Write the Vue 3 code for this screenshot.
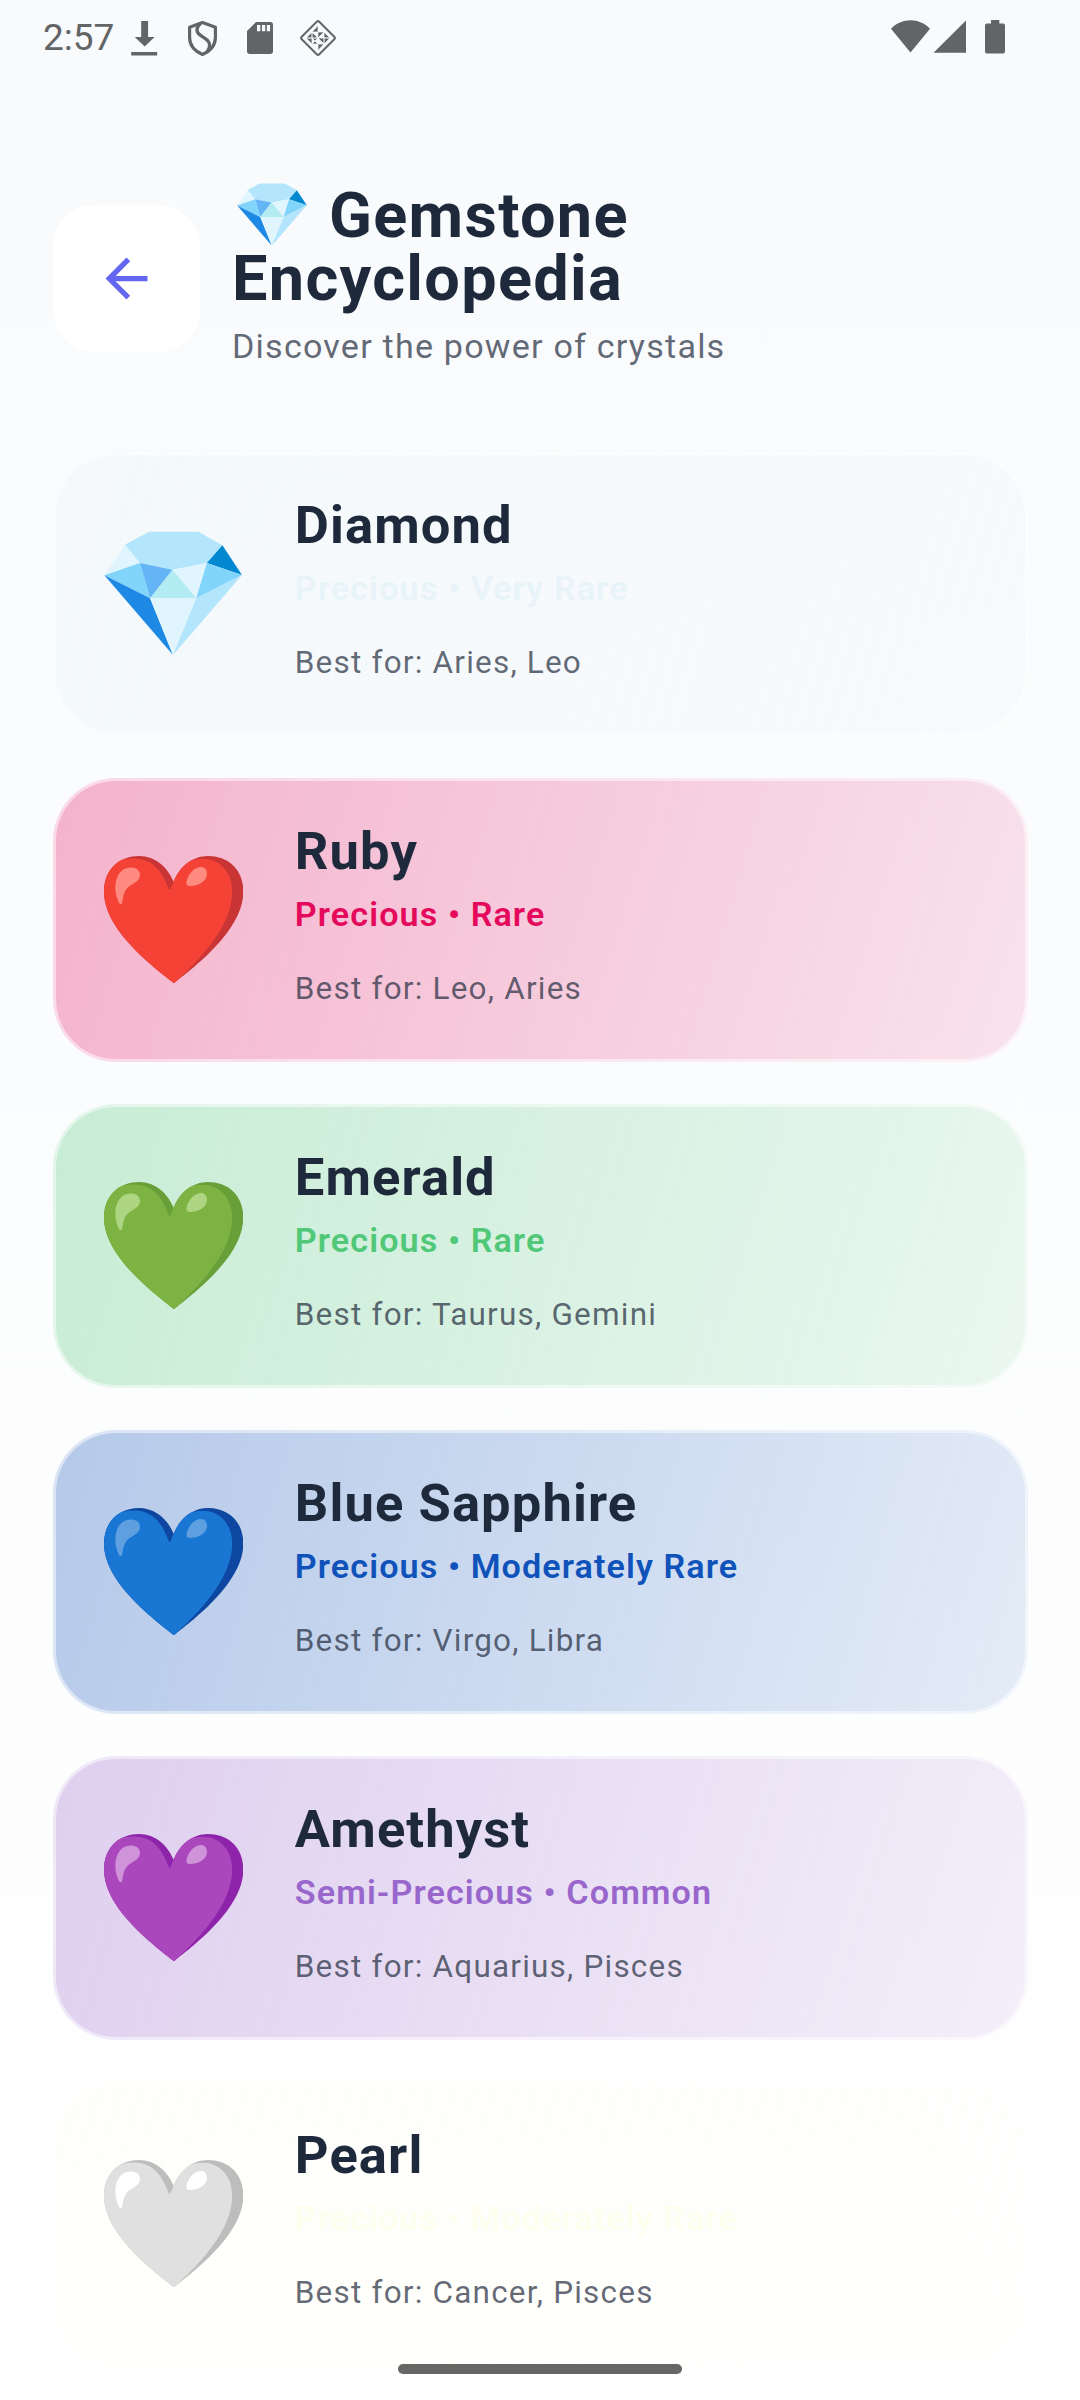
<script setup>
const facets = [
  ['20.8,13.7 45,.7 94.3,.7 118.4,14.3 102.9,32 68.6,38.7 36,32', '#b3e5fc'],
  ['.4,44.3 20.8,13.7 36,32', '#e1f5fe'],
  ['118.4,14.3 138,44 102.9,32', '#0288d1'],
  ['.4,44.3 36,32 46.1,67.3', '#81d4fa'],
  ['36,32 68.6,38.7 46.1,67.3', '#64b5f6'],
  ['68.6,38.7 102.9,32 92.2,67.3', '#e1f5fe'],
  ['68.6,38.7 92.2,67.3 46.1,67.3', '#b2ebf2'],
  ['102.9,32 138,44 92.2,67.3', '#81d4fa'],
  ['.4,44.3 46.1,67.3 69,124', '#1e88e5'],
  ['46.1,67.3 92.2,67.3 69,124', '#e1f5fe'],
  ['92.2,67.3 138,44 69,124', '#b3e5fc'],
]

const gems = [
  { name: 'Diamond', type: 'Precious', rarity: 'Very Rare', signs: 'Aries, Leo', rgb: '232, 244, 248' },
  { name: 'Ruby', type: 'Precious', rarity: 'Rare', signs: 'Leo, Aries', rgb: '229, 9, 92', heart: ['#f44336', '#c93434', '#ff8a80'] },
  { name: 'Emerald', type: 'Precious', rarity: 'Rare', signs: 'Taurus, Gemini', rgb: '80, 200, 120', heart: ['#7cb342', '#689f38', '#aed581'] },
  { name: 'Blue Sapphire', type: 'Precious', rarity: 'Moderately Rare', signs: 'Virgo, Libra', rgb: '15, 82, 186', heart: ['#1976d2', '#0d47a1', '#5e9fe0'] },
  { name: 'Amethyst', type: 'Semi-Precious', rarity: 'Common', signs: 'Aquarius, Pisces', rgb: '153, 102, 204', heart: ['#ab47bc', '#8e24aa', '#ce93d8'] },
  { name: 'Pearl', type: 'Precious', rarity: 'Moderately Rare', signs: 'Cancer, Pisces', rgb: '255, 255, 240', heart: ['#e0e0e0', '#bdbdbd', '#ffffff'] },
]
</script>

<template>
  <div class="screen">
    <div class="status">
      <span class="clock">2:57</span>
      <svg class="notif" width="240" height="44" viewBox="120 16 240 44">
        <path d="M141.200 21h6.900v16h6.600l-10 9.600-10-9.600h6.500zM131.200 52h26v3.400h-26z" fill="#636466" />
        <g fill="none" stroke="#636466" stroke-width="3.200" stroke-linejoin="round">
          <path d="M202.500 22.600l12.900 4.600v10.300c0 7.400-5.200 13.600-12.900 17-7.700-3.400-12.900-9.600-12.900-17V27.200z" />
          <path d="M200.500 23.500c-4.800 4.200-4.800 8.700.4 12.200l4.800 3.200c5 3.500 5 8.600.8 13.600" />
        </g>
        <path d="M256 22h14.200a2.800 2.800 0 0 1 2.800 2.800v26.400a2.800 2.800 0 0 1-2.800 2.800h-20.400a2.800 2.800 0 0 1-2.800-2.800V31zM257 25v6.300h3.300V25zm4.900 0v6.300h3.300V25zm4.900 0v6.300h3.300V25z" fill="#636466" fill-rule="evenodd" />
        <rect x="305.600" y="25.600" width="24.800" height="24.800" rx="1.800" transform="rotate(45 318 38)" fill="none" stroke="#636466" stroke-width="2" />
        <path d="M318 25.500v6.500h-6zM312 32l6 6h-6zM312 32v6h-6zM306 38h6v6zM318 38v6l-6-6zM312 44h6v-6zM318 50.500V44h6zM324 44l-6-6h6zM324 44v-6h6zM330 38h-6v-6zM318 32h6l-6 6z" fill="#636466" stroke="#f9fafc" stroke-width=".7" />
      </svg>
      <svg class="system" width="130" height="44" viewBox="885 16 130 44" fill="#636466">
        <path d="M891 28.700C901.500 17.300 919.500 17.300 930 28.700L910.500 52.500zM966 20.500V52.700H933.500zM991 20h8.300v3.500h3.700a2 2 0 0 1 2 2v26a2 2 0 0 1-2 2h-16a2 2 0 0 1-2-2v-26a2 2 0 0 1 2-2h4z" />
      </svg>
    </div>

    <header class="header">
      <button class="back" aria-label="Back">
        <svg width="63" height="63" viewBox="0 0 24 24"><path d="M20 11H7.830l5.590-5.590L12 4l-8 8 8 8 1.410-1.410L7.830 13H20z" fill="#6366f1" /></svg>
      </button>
      <div class="heading">
        <h1>
          <svg class="title-gem" viewBox="0 0 138.500 124.500"><polygon v-for="(f, i) in facets" :key="i" :points="f[0]" :fill="f[1]" /></svg>Gemstone<br />Encyclopedia
        </h1>
        <p>Discover the power of crystals</p>
      </div>
    </header>

    <main class="list">
      <article v-for="gem in gems" :key="gem.name" class="card" :style="{ '--gem': gem.rgb }">
        <svg v-if="gem.heart" class="art" viewBox="0 0 139.300 127.300">
          <path :fill="gem.heart[1]" d="M70 127.300C61 119 0 78 0 35.700C0 12 17 0 34.800 0C52 0 64 12 69.600 25.700C76 11 88 0 104 0C124 0 139.300 13 139.300 35.700C139.300 78 79 119 70 127.300z" />
          <path :fill="gem.heart[0]" d="M70 127.300C61 119 0 78 0 35.700C0 20 8 8 18 4C45 -2 57 12 64.200 32Q65.400 35.500 67 32L69.600 25.700C73 17 79 9 86 5C110 -3 128.200 12 128.200 35.700C128.200 72 92 107 70 127.300z" />
          <path :fill="gem.heart[2]" d="M14.500 46C9 34 11 20 18 14.500C25 9.500 36 11 36 19C36 27 26 27 21.500 34.500C18.500 40 19 45 18 47Q16.500 50 14.500 46zM83 29C80.500 26 87 11 97 11C103 11 104.500 18 101.500 23C97.500 29 86 31.500 83 29z" />
        </svg>
        <svg v-else class="art gem-art" viewBox="0 0 139.300 127.300"><polygon v-for="(f, i) in facets" :key="i" :points="f[0]" :fill="f[1]" /></svg>
        <div class="info">
          <h2>{{ gem.name }}</h2>
          <p class="rarity">{{ gem.type }} • {{ gem.rarity }}</p>
          <p class="signs">Best for: {{ gem.signs }}</p>
        </div>
      </article>
    </main>
    <div class="gesture"></div>
  </div>
</template>

<style>
body { margin: 0; }
</style>

<style scoped>
.screen {
  position: relative;
  box-sizing: border-box;
  width: 1080px;
  height: 2400px;
  overflow: hidden;
  background: linear-gradient(180deg, #f8fafc, #ffffff);
  color: #1e293b;
  font-family: Roboto, sans-serif;
  letter-spacing: 1.2px;
}
h1, h2, p { margin: 0; }
svg { display: block; flex: none; }
.status {
  display: flex;
  align-items: flex-start;
  box-sizing: border-box;
  height: 76px;
  padding: 16px 65px 0 43px;
}
.clock {
  width: 77px;
  font-size: 37px;
  line-height: 44px;
  letter-spacing: 0;
  color: #636466;
}
.system { margin-left: auto; }
.header {
  display: flex;
  align-items: flex-start;
  box-sizing: border-box;
  height: 376px;
  padding: 108px 53px 0;
}
.back {
  display: flex;
  align-items: center;
  justify-content: center;
  flex: none;
  width: 147px;
  height: 147px;
  margin: 21px 32px 0 0;
  padding: 0;
  border: 0;
  border-radius: 42px;
  background: #ffffff;
}
h1 {
  height: 126px;
  font-size: 63px;
  line-height: 63px;
  font-weight: 700;
  letter-spacing: 1.3125px;
}
.title-gem {
  display: inline-block;
  width: 70px;
  height: 63px;
  margin: -6px 22px 0 5px;
  vertical-align: -9px;
}
.heading p {
  margin-top: 5px;
  font-size: 34.125px;
  line-height: 63px;
  color: rgba(30, 41, 59, 0.7);
}
.list {
  display: flex;
  flex-direction: column;
  gap: 42px;
  padding: 0 52px 0 53px;
}
.card {
  display: flex;
  flex: none;
  box-sizing: border-box;
  height: 284px;
  padding: 39px;
  border: 3px solid rgba(255, 255, 255, 0.5);
  border-radius: 63px;
  background: linear-gradient(106.240deg, rgba(var(--gem), 0.3), rgba(var(--gem), 0.1)) border-box;
}
.art {
  width: 139.300px;
  height: 127.300px;
  margin: 36px 51.500px 0 9px;
}
.gem-art { margin-top: 37px; }
.info { white-space: nowrap; line-height: 63px; }
h2 { font-size: 52.500px; font-weight: 700; letter-spacing: 1.100px; }
.rarity { font-size: 34.125px; font-weight: 600; letter-spacing: 1.100px; color: rgb(var(--gem)); }
.signs { margin-top: 11px; font-size: 31.500px; color: rgba(30, 41, 59, 0.7); }
.gesture {
  position: absolute;
  left: 398px;
  top: 2364px;
  width: 284px;
  height: 10px;
  border-radius: 5px;
  background: #666666;
}
</style>
